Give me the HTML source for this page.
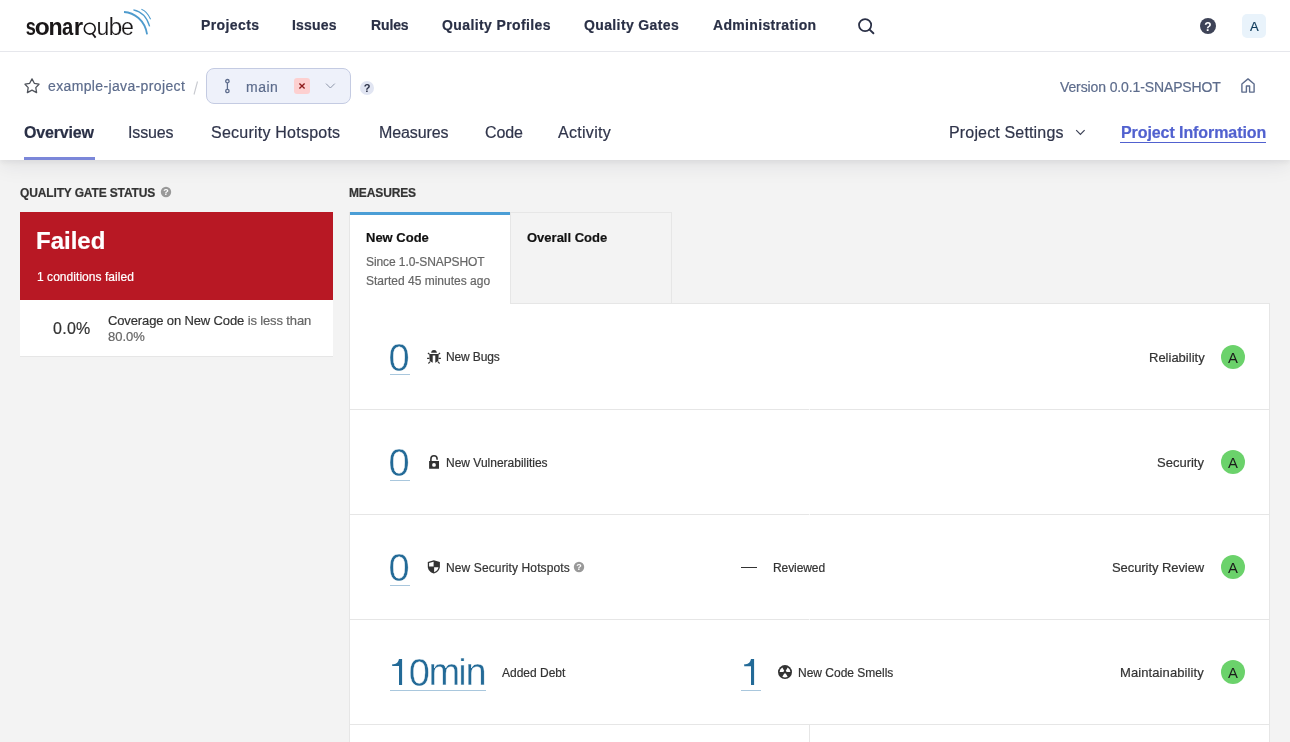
<!DOCTYPE html>
<html><head><meta charset="utf-8">
<style>
*{box-sizing:border-box;margin:0;padding:0}
html,body{width:1290px;height:742px;overflow:hidden;background:#f3f3f3;font-family:"Liberation Sans",sans-serif;color:#333}
.t{position:absolute;white-space:nowrap;will-change:transform;-webkit-text-stroke:0.2px currentColor}
.r{position:absolute;display:block;will-change:transform}
</style></head>
<body>
<div class="r" style="left:0px;top:52px;width:1290px;height:108px;background:#fff;box-shadow:0 2px 6px rgba(29,33,47,0.07),0 6px 20px rgba(29,33,47,0.075);"></div>
<div class="r" style="left:0px;top:0px;width:1290px;height:51px;background:#fff;"></div>
<div class="r" style="left:0px;top:51px;width:1290px;height:1px;background:#e6e7ec;"></div>
<svg class="r" style="left:24px;top:6px;" width="130" height="36" viewBox="0 0 130 36"><g transform="translate(2.30,0) scale(0.771,1)"><text x="-0.83" y="28.8" font-family="Liberation Sans" font-weight="bold" font-size="23.5" fill="#1a1718">s</text></g><g transform="translate(11.80,0) scale(1.046,1)"><text x="-0.92" y="28.8" font-family="Liberation Sans" font-weight="bold" font-size="23.5" fill="#1a1718">o</text></g><g transform="translate(25.90,0) scale(0.987,1)"><text x="-1.55" y="28.8" font-family="Liberation Sans" font-weight="bold" font-size="23.5" fill="#1a1718">n</text></g><g transform="translate(38.70,0) scale(0.862,1)"><text x="-0.69" y="28.8" font-family="Liberation Sans" font-weight="bold" font-size="23.5" fill="#1a1718">a</text></g><g transform="translate(51.40,0) scale(1.022,1)"><text x="-1.55" y="28.8" font-family="Liberation Sans" font-weight="bold" font-size="23.5" fill="#1a1718">r</text></g><g transform="translate(74.00,0) scale(0.982,1)"><text x="-1.53" y="28.8" font-family="Liberation Sans" font-size="23.5" fill="#1a1718" stroke="#fff" stroke-width="0.2">u</text></g><g transform="translate(86.10,0) scale(1.060,1)"><text x="-1.51" y="28.8" font-family="Liberation Sans" font-size="23.5" fill="#1a1718" stroke="#fff" stroke-width="0.2">b</text></g><g transform="translate(98.00,0) scale(0.988,1)"><text x="-1.00" y="28.8" font-family="Liberation Sans" font-size="23.5" fill="#1a1718" stroke="#fff" stroke-width="0.2">e</text></g><circle cx="65.75" cy="22.65" r="5.45" fill="none" stroke="#1a1718" stroke-width="1.6"/><path d="M68.2,27.2 L71.6,31.6" stroke="#1a1718" stroke-width="1.8"/><path d="M100,6 C110,6.5 121,14 123.1,28.4" fill="none" stroke="#4e9bcd" stroke-width="1.8"/><path d="M109.4,3.9 C117,5.5 123,11 125.6,20.4" fill="none" stroke="#4e9bcd" stroke-width="1.3"/><path d="M117.4,3.2 C121,4.5 124.5,8.5 126.6,13.3" fill="none" stroke="#4e9bcd" stroke-width="1.1"/></svg>
<div class="t" style="left:201.2px;top:18px;font-size:14px;line-height:14px;color:#2a3046;font-weight:bold;letter-spacing:0.41px;">Projects</div>
<div class="t" style="left:292.3px;top:18px;font-size:14px;line-height:14px;color:#2a3046;font-weight:bold;letter-spacing:0.19px;">Issues</div>
<div class="t" style="left:370.9px;top:18px;font-size:14px;line-height:14px;color:#2a3046;font-weight:bold;letter-spacing:-0.12px;">Rules</div>
<div class="t" style="left:441.6px;top:18px;font-size:14px;line-height:14px;color:#2a3046;font-weight:bold;letter-spacing:0.39px;">Quality Profiles</div>
<div class="t" style="left:583.6px;top:18px;font-size:14px;line-height:14px;color:#2a3046;font-weight:bold;letter-spacing:0.375px;">Quality Gates</div>
<div class="t" style="left:712.7px;top:18px;font-size:14px;line-height:14px;color:#2a3046;font-weight:bold;letter-spacing:0.33px;">Administration</div>
<svg class="r" style="left:854px;top:14px;" width="24" height="24" viewBox="0 0 24 24"><circle cx="11.1" cy="11.1" r="6.1" fill="none" stroke="#2a3046" stroke-width="1.75"/><path d="M15.6,15.6 L19.4,19.3" stroke="#2a3046" stroke-width="1.9" stroke-linecap="round"/></svg>
<svg class="r" style="left:1200px;top:18px;" width="16" height="16" viewBox="0 0 16 16"><circle cx="8" cy="8" r="8" fill="#3e4357"/><text x="8" y="12.6" text-anchor="middle" font-family="Liberation Sans" font-weight="bold" font-size="12" fill="#fff">?</text></svg>
<div class="r" style="left:1242px;top:14px;width:24px;height:24px;background:#e9f3fb;border-radius:5px;"></div>
<div class="t" style="left:1250px;top:20px;font-size:13px;line-height:13px;color:#0e3a5a;">A</div>
<div class="r" style="left:0px;top:52px;width:1290px;height:108px;background:#fff;"></div>
<svg class="r" style="left:22px;top:76px;" width="20" height="20" viewBox="0 0 20 20"><path d="M10,2.9 L12.3,7.3 L17,8.2 L13.8,11.6 L14.6,16.6 L10,14.2 L5.4,16.6 L6.2,11.6 L3,8.2 L7.7,7.3 Z" fill="none" stroke="#50545c" stroke-width="1.3" stroke-linejoin="round"/></svg>
<div class="t" style="left:48.1px;top:79px;font-size:14px;line-height:14px;color:#5d6c8c;letter-spacing:0.36px;">example-java-project</div>
<svg class="r" style="left:190px;top:78px;" width="12" height="20" viewBox="0 0 12 20"><path d="M7.5,3.5 L4,16.5" stroke="#c7c9cf" stroke-width="1.1"/></svg>
<div class="r" style="left:206px;top:68px;width:145px;height:36px;background:#eef1fa;border:1px solid #c4cbe2;border-radius:8px;box-sizing:border-box;"></div>
<svg class="r" style="left:222px;top:76px;" width="12" height="20" viewBox="0 0 12 20"><circle cx="5.4" cy="5.2" r="1.7" fill="none" stroke="#5d6c8c" stroke-width="1.3"/><circle cx="5.4" cy="15" r="1.7" fill="none" stroke="#5d6c8c" stroke-width="1.3"/><path d="M5.4,6.9 V13.3" stroke="#5d6c8c" stroke-width="1.3"/></svg>
<div class="t" style="left:246px;top:80px;font-size:14px;line-height:14px;color:#5d6c8c;letter-spacing:0.47px;">main</div>
<div class="r" style="left:294px;top:78px;width:16px;height:16px;background:#fdd0d0;border-radius:3px;"></div>
<svg class="r" style="left:294px;top:78px;" width="16" height="16" viewBox="0 0 16 16"><path d="M5.4,5.4 L10.6,10.6 M10.6,5.4 L5.4,10.6" stroke="#8e1b1b" stroke-width="1.35"/></svg>
<svg class="r" style="left:322px;top:80px;" width="16" height="12" viewBox="0 0 16 12"><path d="M4,3.6 L8.4,8 L12.8,3.6" fill="none" stroke="#8d95a8" stroke-width="1"/></svg>
<svg class="r" style="left:360px;top:81px;" width="14" height="14" viewBox="0 0 14 14"><circle cx="7" cy="7" r="7" fill="#e1e5f2"/><text x="7" y="11" text-anchor="middle" font-family="Liberation Sans" font-weight="bold" font-size="11" fill="#2a3046">?</text></svg>
<div class="t" style="right:69.59999999999991px;top:80px;font-size:14px;line-height:14px;color:#5d6c8c;letter-spacing:-0.12px;">Version 0.0.1-SNAPSHOT</div>
<svg class="r" style="left:1240px;top:77px;" width="16" height="17" viewBox="0 0 16 17"><path d="M1.9,15.1 V7 L8,1.9 L14.1,7 V15.1 H9.6 V9 H6.4 V15.1 Z" fill="none" stroke="#5d6c8c" stroke-width="1.4" stroke-linejoin="round"/></svg>
<div class="t" style="left:24.4px;top:124.6px;font-size:16px;line-height:16px;color:#2a3046;font-weight:bold;letter-spacing:-0.19px;">Overview</div>
<div class="r" style="left:24px;top:157px;width:71px;height:3px;background:#7b87d9;"></div>
<div class="t" style="left:128.3px;top:124.6px;font-size:16px;line-height:16px;color:#30354b;letter-spacing:-0.16px;">Issues</div>
<div class="t" style="left:211.4px;top:124.6px;font-size:16px;line-height:16px;color:#30354b;letter-spacing:0.23px;">Security Hotspots</div>
<div class="t" style="left:379.2px;top:124.6px;font-size:16px;line-height:16px;color:#30354b;letter-spacing:-0.09px;">Measures</div>
<div class="t" style="left:484.5px;top:124.6px;font-size:16px;line-height:16px;color:#30354b;letter-spacing:-0.13px;">Code</div>
<div class="t" style="left:557.5px;top:124.6px;font-size:16px;line-height:16px;color:#30354b;letter-spacing:0.3px;">Activity</div>
<div class="t" style="left:948.5px;top:124.6px;font-size:16px;line-height:16px;color:#30354b;letter-spacing:0.16px;">Project Settings</div>
<svg class="r" style="left:1074px;top:126px;" width="14" height="12" viewBox="0 0 14 12"><path d="M2.2,4.2 L6.4,8.4 L10.6,4.1" fill="none" stroke="#3e4357" stroke-width="1.2"/></svg>
<div class="t" style="left:1120.5px;top:125px;font-size:16px;line-height:16px;color:#5161cf;font-weight:bold;letter-spacing:-0.08px;">Project Information</div>
<div class="r" style="left:1120px;top:142px;width:146px;height:1px;background:#5161cf;"></div>
<div class="t" style="left:20.3px;top:187px;font-size:12px;line-height:12px;color:#333;font-weight:bold;letter-spacing:-0.14px;">QUALITY GATE STATUS</div>
<svg class="r" style="left:160px;top:186px;" width="12" height="12" viewBox="0 0 12 12"><circle cx="6" cy="6" r="5.2" fill="#999"/><text x="6" y="9.4" text-anchor="middle" font-family="Liberation Sans" font-weight="bold" font-size="9" fill="#fff">?</text></svg>
<div class="r" style="left:20px;top:212px;width:313px;height:88px;background:#b81824;"></div>
<div class="t" style="left:36px;top:229px;font-size:24px;line-height:24px;color:#fff;font-weight:bold;">Failed</div>
<div class="t" style="left:36.8px;top:271px;font-size:12px;line-height:12px;color:#fff;letter-spacing:0.044px;">1 conditions failed</div>
<div class="r" style="left:20px;top:300px;width:313px;height:57px;background:#fff;border-bottom:1px solid #e6e6e6;box-sizing:border-box;"></div>
<div class="t" style="left:53.3px;top:321px;font-size:16px;line-height:16px;color:#333;letter-spacing:0.27px;">0.0%</div>
<div class="t" style="left:108.2px;top:314px;font-size:13px;line-height:13px;color:#333;letter-spacing:-0.13px;">Coverage on New Code <span style="color:#666">is less than</span></div>
<div class="t" style="left:108px;top:330px;font-size:13px;line-height:13px;color:#666;">80.0%</div>
<div class="t" style="left:348.8px;top:187px;font-size:12px;line-height:12px;color:#333;font-weight:bold;letter-spacing:-0.13px;">MEASURES</div>
<div class="r" style="left:349px;top:303px;width:921px;height:460px;background:#fff;border:1px solid #e6e6e6;box-sizing:border-box;"></div>
<div class="r" style="left:349px;top:212px;width:162px;height:92px;background:#fff;border-left:1px solid #e6e6e6;border-right:1px solid #e6e6e6;box-sizing:border-box;"></div>
<div class="r" style="left:350px;top:212px;width:160px;height:3px;background:#4b9ed6;"></div>
<div class="t" style="left:366px;top:231px;font-size:13px;line-height:13px;color:#111;font-weight:bold;">New Code</div>
<div class="t" style="left:366px;top:256px;font-size:12px;line-height:12px;color:#666;letter-spacing:-0.08px;">Since 1.0-SNAPSHOT</div>
<div class="t" style="left:366px;top:275px;font-size:12px;line-height:12px;color:#666;">Started 45 minutes ago</div>
<div class="r" style="left:510px;top:212px;width:162px;height:92px;background:#f3f3f3;border:1px solid #e6e6e6;box-sizing:border-box;"></div>
<div class="t" style="left:527px;top:231px;font-size:13px;line-height:13px;color:#111;font-weight:bold;">Overall Code</div>
<div class="r" style="left:350px;top:409px;width:919px;height:1px;background:#e6e6e6;"></div>
<div class="r" style="left:350px;top:514px;width:919px;height:1px;background:#e6e6e6;"></div>
<div class="r" style="left:350px;top:619px;width:919px;height:1px;background:#e6e6e6;"></div>
<div class="r" style="left:350px;top:724px;width:919px;height:1px;background:#e6e6e6;"></div>
<div class="r" style="left:809px;top:725px;width:1px;height:30px;background:#e6e6e6;"></div>
<div class="r" style="left:809px;top:409px;width:1px;height:1px;background:#f7f7f7;"></div>
<div class="r" style="left:809px;top:514px;width:1px;height:1px;background:#f7f7f7;"></div>
<div class="r" style="left:809px;top:619px;width:1px;height:1px;background:#f7f7f7;"></div>
<svg class="r" style="left:0;top:0" width="1290" height="742" viewBox="0 0 1290 742"><text x="388.40" y="371.1" font-family="Liberation Sans" font-size="38" fill="#236a97" stroke="#fff" stroke-width="0.4">0</text><rect x="390" y="374" width="20" height="1" fill="#a9c7dd"/></svg>
<svg class="r" style="left:424px;top:346px;" width="20" height="20" viewBox="0 0 20 20"><g fill="#333"><path d="M7.1,6.7 C7.4,4.6 8.5,4 10,4 C11.5,4 12.6,4.6 12.9,6.7 Z"/><path d="M5.3,8 H14.7 L14.3,15 L11.3,16.7 V9.6 H8.7 V16.7 L5.7,15 Z"/></g><g stroke="#333" stroke-width="1.1"><path d="M3.9,7 L5.5,8.2 M16.1,7 L14.5,8.2 M3.1,12.4 H5.5 M16.9,12.4 H14.5 M4.4,17.5 L6.2,15.7 M15.6,17.5 L13.8,15.7"/></g></svg>
<div class="t" style="left:446px;top:351px;font-size:12px;line-height:12px;color:#333;letter-spacing:-0.14px;">New Bugs</div>
<div class="t" style="right:85.79999999999995px;top:351px;font-size:13px;line-height:13px;color:#333;">Reliability</div>
<svg class="r" style="left:1221px;top:345px;" width="24" height="24" viewBox="0 0 24 24"><circle cx="12" cy="12" r="12" fill="#6bd26b"/><text x="12" y="17.5" text-anchor="middle" font-family="Liberation Sans" font-size="14.8" fill="#1b1b1b">A</text></svg>
<svg class="r" style="left:0;top:0" width="1290" height="742" viewBox="0 0 1290 742"><text x="388.40" y="476.1" font-family="Liberation Sans" font-size="38" fill="#236a97" stroke="#fff" stroke-width="0.4">0</text><rect x="390" y="480" width="20" height="1" fill="#a9c7dd"/></svg>
<svg class="r" style="left:424px;top:452px;" width="20" height="20" viewBox="0 0 20 20"><path d="M6.9,9.3 V6.9 A3.1,3.1 0 0 1 13.1,6.9 V7.7" fill="none" stroke="#333" stroke-width="1.6"/><path fill-rule="evenodd" fill="#333" d="M5.1,9 H15 V16.8 H5.1 Z M10,11 A1.9,1.9 0 1 0 10,14.8 A1.9,1.9 0 1 0 10,11 Z"/></svg>
<div class="t" style="left:446px;top:457px;font-size:12px;line-height:12px;color:#333;">New Vulnerabilities</div>
<div class="t" style="right:85.79999999999995px;top:456px;font-size:13px;line-height:13px;color:#333;">Security</div>
<svg class="r" style="left:1221px;top:450px;" width="24" height="24" viewBox="0 0 24 24"><circle cx="12" cy="12" r="12" fill="#6bd26b"/><text x="12" y="17.5" text-anchor="middle" font-family="Liberation Sans" font-size="14.8" fill="#1b1b1b">A</text></svg>
<svg class="r" style="left:0;top:0" width="1290" height="742" viewBox="0 0 1290 742"><text x="388.40" y="581.1" font-family="Liberation Sans" font-size="38" fill="#236a97" stroke="#fff" stroke-width="0.4">0</text><rect x="390" y="585" width="20" height="1" fill="#a9c7dd"/></svg>
<svg class="r" style="left:424px;top:557px;" width="20" height="20" viewBox="0 0 20 20"><path fill="#333" d="M9.8,3.2 L15.9,5 V9.6 C15.9,13 13.4,15.5 9.8,16.6 C6.2,15.5 3.8,13 3.8,9.6 V5 Z"/><path fill="#fff" d="M5.1,6 L9.6,4.7 V9.6 H5.1 Z"/><path fill="#fff" d="M10.1,10.3 H14.5 C14.2,12.6 12.6,14.3 10.1,15.2 Z"/></svg>
<div class="t" style="left:445.5px;top:562px;font-size:12px;line-height:12px;color:#333;letter-spacing:0.12px;">New Security Hotspots</div>
<svg class="r" style="left:573px;top:561px;" width="12" height="12" viewBox="0 0 12 12"><circle cx="6" cy="6" r="5.2" fill="#999"/><text x="6" y="9.4" text-anchor="middle" font-family="Liberation Sans" font-weight="bold" font-size="9" fill="#fff">?</text></svg>
<div class="r" style="left:741px;top:567px;width:16px;height:1px;background:#333;"></div>
<div class="t" style="left:773.3px;top:562px;font-size:12px;line-height:12px;color:#333;letter-spacing:-0.09px;">Reviewed</div>
<div class="t" style="right:85.79999999999995px;top:561px;font-size:13px;line-height:13px;color:#333;letter-spacing:-0.07px;">Security Review</div>
<svg class="r" style="left:1221px;top:555px;" width="24" height="24" viewBox="0 0 24 24"><circle cx="12" cy="12" r="12" fill="#6bd26b"/><text x="12" y="17.5" text-anchor="middle" font-family="Liberation Sans" font-size="14.8" fill="#1b1b1b">A</text></svg>
<svg class="r" style="left:0;top:0" width="1290" height="742" viewBox="0 0 1290 742"><path fill="#236a97" d="M399,659 H402.10 V685.00 H399 V666.10 H392.20 V664.20 H393.80 C396.50,664.20 398.50,662.00 399,659 Z"/><text x="408.70" y="685.6" font-family="Liberation Sans" font-size="38" fill="#236a97" stroke="#fff" stroke-width="0.4">0</text><text x="428.60" y="685" font-family="Liberation Sans" font-size="38" fill="#236a97" stroke="#fff" stroke-width="0.4">m</text><text x="458.50" y="685" font-family="Liberation Sans" font-size="36" fill="#236a97" stroke="#fff" stroke-width="0.4">i</text><text x="465.40" y="685" font-family="Liberation Sans" font-size="38" fill="#236a97" stroke="#fff" stroke-width="0.4">n</text><rect x="390" y="690" width="96" height="1" fill="#a9c7dd"/></svg>
<div class="t" style="left:501.7px;top:667px;font-size:12px;line-height:12px;color:#333;">Added Debt</div>
<svg class="r" style="left:0;top:0" width="1290" height="742" viewBox="0 0 1290 742"><path fill="#236a97" d="M751,659.1 H754.10 V685.10 H751 V666.20 H744.20 V664.30 H745.80 C748.50,664.30 750.50,662.10 751,659.1 Z"/><rect x="741" y="690" width="20" height="1" fill="#a9c7dd"/></svg>
<svg class="r" style="left:774px;top:662px;" width="22" height="22" viewBox="0 0 22 22"><circle cx="11" cy="10.1" r="7" fill="#333"/><path fill="#fff" d="M5.60,10.10 A5.4,5.4 0 0 1 8.30,5.42 L10.25,8.80 A1.5,1.5 0 0 0 9.50,10.10 Z M13.70,5.42 A5.4,5.4 0 0 1 16.40,10.10 L12.50,10.10 A1.5,1.5 0 0 0 11.75,8.80 Z M13.70,14.78 A5.4,5.4 0 0 1 8.30,14.78 L10.25,11.40 A1.5,1.5 0 0 0 11.75,11.40 Z"/></svg>
<div class="t" style="left:798px;top:667px;font-size:12px;line-height:12px;color:#333;">New Code Smells</div>
<div class="t" style="right:85.79999999999995px;top:666px;font-size:13px;line-height:13px;color:#333;letter-spacing:0.1px;">Maintainability</div>
<svg class="r" style="left:1221px;top:660px;" width="24" height="24" viewBox="0 0 24 24"><circle cx="12" cy="12" r="12" fill="#6bd26b"/><text x="12" y="17.5" text-anchor="middle" font-family="Liberation Sans" font-size="14.8" fill="#1b1b1b">A</text></svg>
</body></html>
